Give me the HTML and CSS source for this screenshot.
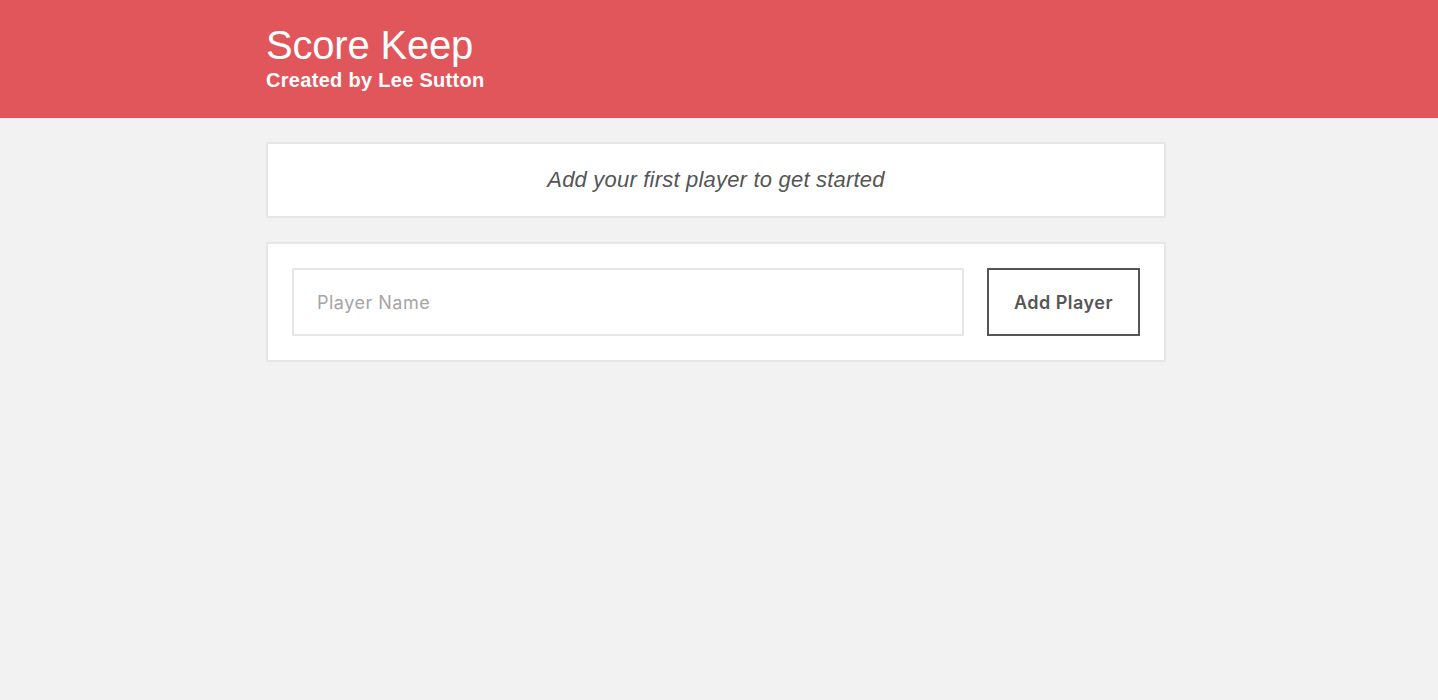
FILE: index.html
```html
<!DOCTYPE html>
<html>
<head>
<meta charset="utf-8">
<link rel="stylesheet" href="styles.css">
</head>
<body>
<header class="title-bar">
  <div class="wrapper">
    <h1 class="title">Score Keep</h1>
    <h2 class="subtitle">Created by Lee Sutton</h2>
  </div>
</header>
<main class="wrapper content">
  <div class="item">
    <p class="item__message">Add your first player to get started</p>
  </div>
  <div class="item">
    <form class="form">
      <input class="form__input" type="text" placeholder="Player Name">
      <button class="button" type="button">Add Player</button>
    </form>
  </div>
</main>
</body>
</html>
```
FILE: styles.css
```css
* { box-sizing: border-box; }
html, body { margin: 0; padding: 0; }
body {
  background: #f2f2f2;
  font-family: "Liberation Sans", Helvetica, Arial, sans-serif;
  color: #555;
  min-height: 700px;
}
.wrapper {
  width: 900px;
  margin: 0 0 0 266px;
}
.title-bar {
  background: #e1565b;
  color: #fff;
  height: 118px;
  padding-top: 22px;
}
.title {
  margin: 0;
  font-size: 40px;
  font-weight: 400;
  line-height: 46px;
  letter-spacing: -0.2px;
}
.subtitle {
  margin: 0;
  font-size: 20px;
  font-weight: 700;
  line-height: 24px;
  letter-spacing: 0.3px;
}
.content {
  padding-top: 24px;
  display: flex;
  flex-direction: column;
  gap: 24px;
}
.item {
  background: #fff;
  border: 2px solid #e6e6e6;
  padding: 24px;
}
.item__message {
  margin: 0;
  text-align: center;
  font-style: italic;
  font-size: 22px;
  line-height: 24px;
  letter-spacing: 0.2px;
  color: #555;
}
.form {
  display: flex;
  gap: 23px;
  margin: 0;
}
.form__input {
  flex: 1;
  height: 68px;
  border: 2px solid #e6e6e6;
  padding: 0 23px;
  font-family: Inter, "Liberation Sans", sans-serif;
  font-size: 18px;
  letter-spacing: 0.5px;
  color: #555;
  outline: none;
}
.form__input::placeholder { color: #a5a5a5; }
.button {
  width: 153px;
  height: 68px;
  background: #fff;
  border: 2px solid #555;
  color: #555;
  font-family: Inter, "Liberation Sans", sans-serif;
  font-size: 18px;
  font-weight: 600;
  letter-spacing: 0.5px;
  cursor: pointer;
}
```
